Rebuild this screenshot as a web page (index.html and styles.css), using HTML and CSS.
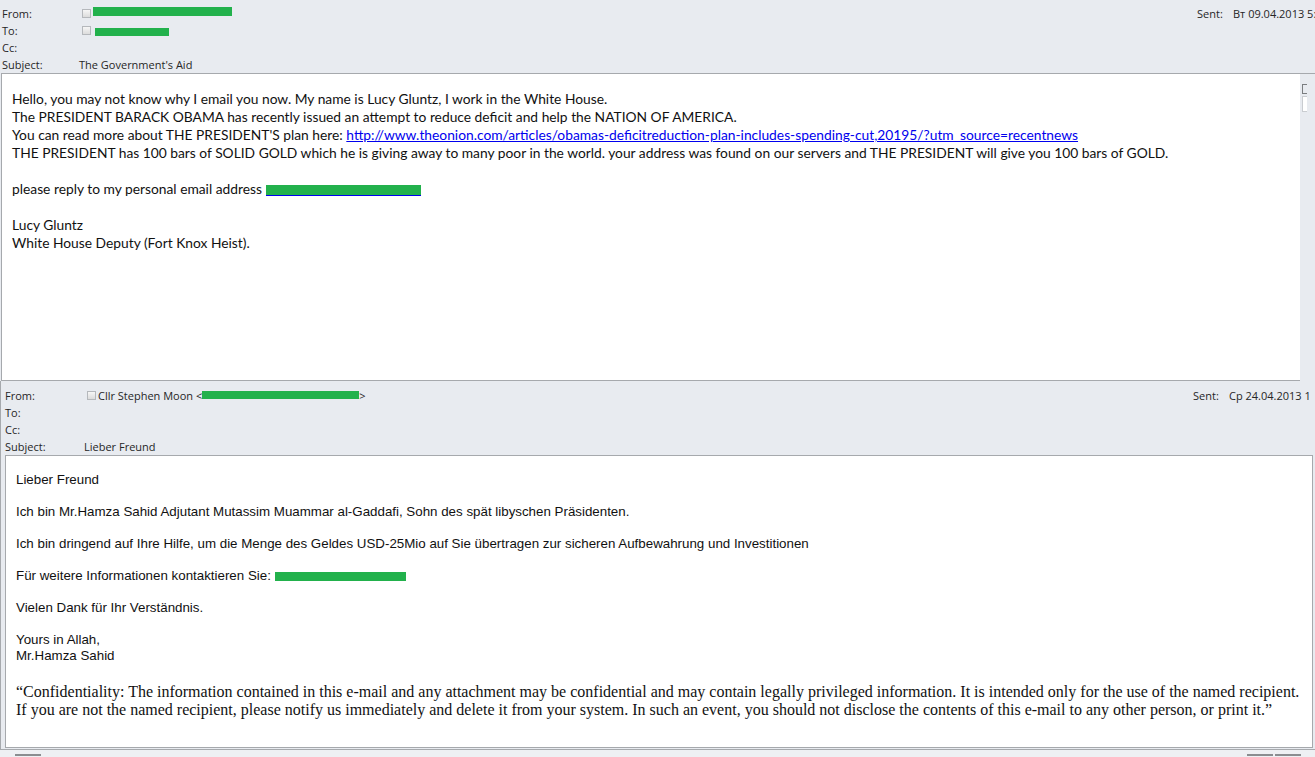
FILE: index.html
```html
<!DOCTYPE html>
<html>
<head>
<meta charset="utf-8">
<link rel="stylesheet" href="styles.css">
</head>
<body>
<div class="page">
  <section class="mail mail-one">
    <div class="hdr">
      <div class="fields">
        <div class="row"><span class="lbl">From:</span><span class="val"><span class="chk"></span><span class="red r-from1"></span></span></div>
        <div class="row"><span class="lbl">To:</span><span class="val"><span class="chk"></span><span class="red r-to1"></span></span></div>
        <div class="row"><span class="lbl">Cc:</span><span class="val"></span></div>
        <div class="row"><span class="lbl">Subject:</span><span class="val">The Government's Aid</span></div>
      </div>
      <div class="sent"><span class="slbl">Sent:</span><span class="sval">Вт 09.04.2013 5:</span></div>
    </div>
    <div class="bodywrap">
      <div class="body calibri">
        <p>Hello, you may not know why I email you now. My name is Lucy Gluntz, I work in the White House.<br>
        The PRESIDENT BARACK OBAMA has recently issued an attempt to reduce deficit and help the NATION OF AMERICA.<br>
        You can read more about THE PRESIDENT'S plan here: <a class="lnk" href="#">http://www.theonion.com/articles/obamas-deficitreduction-plan-includes-spending-cut,20195/?utm_source=recentnews</a><br>
        THE PRESIDENT has 100 bars of SOLID GOLD which he is giving away to many poor in the world. your address was found on our servers and THE PRESIDENT will give you 100 bars of GOLD.</p>
        <p>please reply to my personal email address <a class="lnk mail-red" href="#"><span class="red r-body1"></span></a></p>
        <p>Lucy Gluntz<br>White House Deputy (Fort Knox Heist).</p>
      </div>
      <div class="sbar"><span class="sbox"></span><span class="sbox2"></span></div>
    </div>
  </section>

  <section class="mail mail-two">
    <div class="hdr">
      <div class="fields">
        <div class="row"><span class="lbl">From:</span><span class="val"><span class="chk"></span>Cllr Stephen Moon &lt;<span class="red r-from2"></span>&gt;</span></div>
        <div class="row"><span class="lbl">To:</span><span class="val"></span></div>
        <div class="row"><span class="lbl">Cc:</span><span class="val"></span></div>
        <div class="row"><span class="lbl">Subject:</span><span class="val">Lieber Freund</span></div>
      </div>
      <div class="sent"><span class="slbl">Sent:</span><span class="sval">Ср 24.04.2013 1</span></div>
    </div>
    <div class="body arial">
      <p>Lieber Freund</p>
      <p>Ich bin Mr.Hamza Sahid Adjutant Mutassim Muammar al-Gaddafi, Sohn des spät libyschen Präsidenten.</p>
      <p>Ich bin dringend auf Ihre Hilfe, um die Menge des Geldes USD-25Mio auf Sie übertragen zur sicheren Aufbewahrung und Investitionen</p>
      <p>Für weitere Informationen kontaktieren Sie: <span class="red r-body2"></span></p>
      <p>Vielen Dank für Ihr Verständnis.</p>
      <p>Yours in Allah,<br>Mr.Hamza Sahid</p>
      <p class="conf">“Confidentiality: The information contained in this e-mail and any attachment may be confidential and may contain legally privileged information. It is intended only for the use of the named recipient. If you are not the named recipient, please notify us immediately and delete it from your system. In such an event, you should not disclose the contents of this e-mail to any other person, or print it.”</p>
    </div>
  </section>
  <div class="foot"><span class="tab t1"></span><span class="tab t2"></span><span class="tab t3"></span></div>
</div>
</body>
</html>
```

FILE: styles.css
```css
html, body {
  margin: 0;
  padding: 0;
  overflow: hidden;
}
body {
  width: 1315px;
  height: 757px;
  background: #e8ebf0;
}
.page {
  width: 1315px;
  height: 757px;
  overflow: hidden;
  background: #e8ebf0;
  display: flex;
  flex-direction: column;
}
.hdr {
  display: flex;
  justify-content: space-between;
  font-family: "Open Sans", "Noto Sans", sans-serif;
  font-size: 11px;
  color: #262626;
  white-space: nowrap;
}
.mail-one .hdr {
  height: 73px;
  padding: 5px 0 0 2px;
  box-sizing: border-box;
}
.fields {
  display: flex;
  flex-direction: column;
}
.row {
  display: flex;
  height: 17.3px;
  align-items: center;
}
.lbl {
  width: 77px;
}
.val {
  display: flex;
  align-items: center;
}
.chk {
  display: inline-block;
  width: 7px;
  height: 7px;
  border: 1px solid #b5b8bc;
  background: linear-gradient(#f6f6f6, #dcdcdc);
  margin: 0 2px 0 3px;
}
.red {
  display: inline-block;
  background: #22b14c;
}
.r-from1 { width: 139px; height: 9px; margin-top: -4px; }
.r-to1 { width: 74px; height: 8px; margin-left: 2px; margin-top: 3px; }
.r-from2 { width: 157px; height: 8px; margin-top: -2px; }
.r-body1 { width: 155px; height: 10px; vertical-align: -1px; }
.r-body2 { width: 131px; height: 9px; vertical-align: -1px; }
.sent {
  display: flex;
  height: 17.3px;
  align-items: center;
  overflow: hidden;
  flex: 0 0 auto;
}
.mail-one .sent { width: 118px; }
.mail-two .sent { width: 122px; }
.slbl { flex: 0 0 36px; }
.sval { white-space: nowrap; flex: 0 0 auto; }

.bodywrap {
  display: flex;
  height: 308px;
}
.mail-one .body {
  flex: 0 0 auto;
  width: 1299px;
  border: 1px solid #a6a9ad;
  border-right: none;
  background: #fff;
  padding: 16px 0 0 10px;
  box-sizing: border-box;
  margin-left: 1px;
}
.sbar {
  flex: 1;
  position: relative;
  background: #e8ebf0;
  border-top: 1px solid #a6a9ad;
}
.sbox {
  position: absolute;
  left: 2px;
  top: 10px;
  width: 4px;
  height: 8px;
  border: 1px solid #7a7d80;
  border-right: none;
}
.sbox2 {
  position: absolute;
  left: 2px;
  top: 22px;
  width: 4px;
  height: 14px;
  border: 1px solid #c9ccd0;
  border-right: none;
  background: #fff;
}
.body p {
  margin: 0;
}
.calibri {
  font-family: Lato, "Liberation Sans", sans-serif;
  font-size: 13.8px;
  line-height: 18px;
  color: #111;
}
.calibri p + p {
  margin-top: 18px;
}
.lnk {
  color: #0000ee;
  text-decoration: underline;
}
.mail-red {
  display: inline-block;
  border-bottom: 1px solid #0000ee;
  text-decoration: none;
  line-height: 12px;
}

.mail-two {
  border-left: 1px solid #a6a9ad;
  border-bottom: 1px solid #a6a9ad;
}
.mail-two .hdr {
  height: 74px;
  padding: 6px 0 0 4px;
  box-sizing: border-box;
}
.mail-two .lbl { width: 79px; }
.mail-two .body {
  margin-left: 4px;
  width: 1308px;
  height: 293px;
  box-sizing: border-box;
  background: #fff;
  border: 1px solid #a6a9ad;
  padding: 16px 0 0 10px;
  margin-bottom: 1px;
}
.arial {
  font-family: "Liberation Sans", Arial, sans-serif;
  font-size: 13.33px;
  line-height: 16px;
  color: #111;
}
.arial p + p {
  margin-top: 16px;
}
.arial p.conf {
  font-family: "Liberation Serif", "Times New Roman", serif;
  font-size: 16px;
  line-height: 18px;
  margin-top: 19px;
  padding-right: 8px;
}
.foot {
  flex: 1;
  position: relative;
  background: #eef0f3;
}
.tab {
  position: absolute;
  top: 4px;
  height: 2px;
  background: #8a8d90;
}
.t1 { left: 15px; width: 26px; }
.t2 { left: 1247px; width: 26px; }
.t3 { left: 1275px; width: 26px; }
```
